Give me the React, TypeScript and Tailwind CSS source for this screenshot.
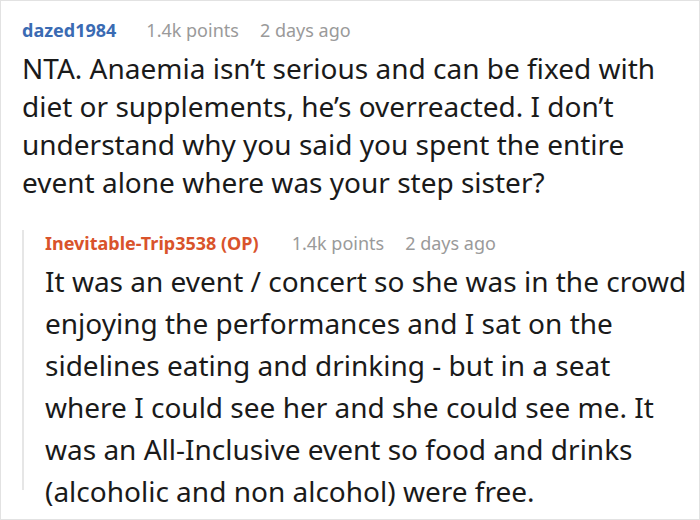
import React from "react";

export default function App() {
  return (
    <div
      className="w-[700px] h-[520px] border border-[#e2e2e2] bg-white overflow-hidden box-border"
      style={{ fontFamily: '"Noto Sans", "Open Sans", sans-serif' }}
    >
      <div className="pl-[21px] pr-2 pt-[16px]">
        <div className="flex items-baseline text-[18px] leading-[26px] whitespace-nowrap">
          <span className="font-bold text-[#3a6bb3]">dazed1984</span>
          <span className="ml-[30px] text-[#9a9a9a]">1.4k points</span>
          <span className="ml-[21px] text-[#9a9a9a]">2 days ago</span>
        </div>
        <p className="mt-[6px] text-[28px] leading-[38px] text-[#1a1a1a]">
          NTA. Anaemia isn’t serious and can be fixed with diet or supplements, he’s overreacted. I don’t understand why you said you spent the entire event alone where was your step sister?
        </p>
        <div className="mt-[41px] h-[260px] border-l-2 border-[#e6e6e6] pl-[21px]">
          <div className="-mt-[12px] flex items-baseline text-[18px] leading-[26px] whitespace-nowrap">
            <span className="font-bold text-[#d9532b]">Inevitable-Trip3538 (OP)</span>
            <span className="ml-[33px] text-[#9a9a9a]">1.4k points</span>
            <span className="ml-[21px] text-[#9a9a9a]">2 days ago</span>
          </div>
          <p className="mt-[4px] text-[28px] leading-[42px] text-[#1a1a1a]">
            It was an event / concert so she was in the crowd enjoying the performances and I sat on the sidelines eating and drinking - but in a seat where I could see her and she could see me. It was an All-Inclusive event so food and drinks (alcoholic and non alcohol) were free.
          </p>
        </div>
      </div>
    </div>
  );
}
